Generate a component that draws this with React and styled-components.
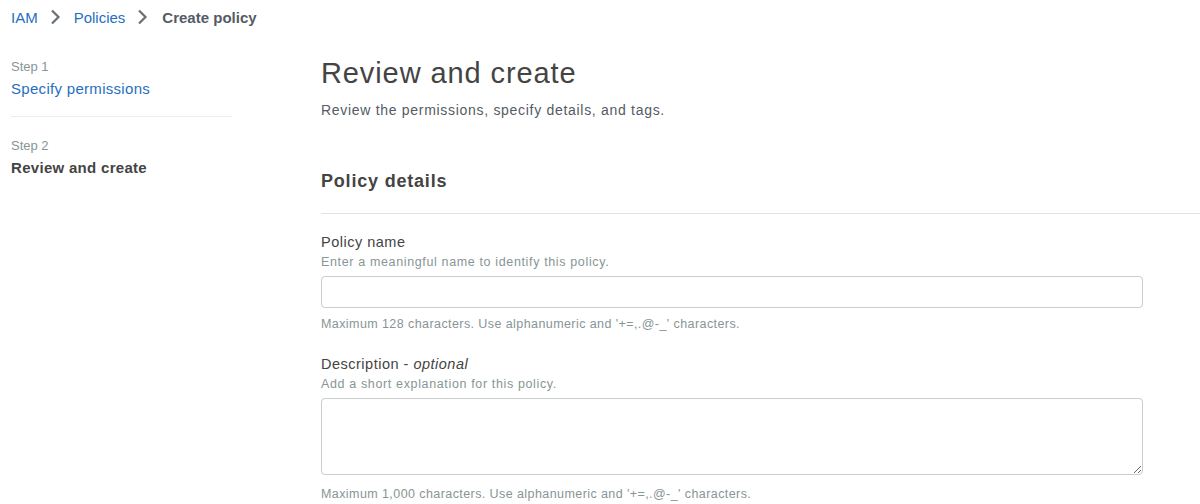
import React from "react";
import styled, { createGlobalStyle } from "styled-components";

const GlobalStyle = createGlobalStyle`
  body {
    margin: 0;
    background: #ffffff;
    font-family: "Liberation Sans", Arial, sans-serif;
    color: #444444;
  }
`;

const Page = styled.div`
  width: 1200px;
  height: 504px;
  overflow: hidden;
`;

const Breadcrumbs = styled.nav`
  height: 34px;
  display: flex;
  align-items: center;
  padding-left: 11px;
  font-size: 15px;
`;

const Crumb = styled.a`
  color: ${(p) => (p.$current ? "#545b64" : "#1f6fbf")};
  font-weight: ${(p) => (p.$current ? 700 : 400)};
  text-decoration: none;
`;

const Chevron = styled.svg`
  width: 12px;
  height: 16px;
  margin: 0 ${(p) => p.$gap || 12}px 0 11px;
`;

const Body = styled.div`
  display: flex;
  align-items: flex-start;
`;

const SideNav = styled.ol`
  list-style: none;
  margin: 0 0 0 11px;
  padding: 24px 0 0;
  width: 221px;
  flex-shrink: 0;
`;

const Step = styled.li`
  padding: ${(p) => (p.$first ? "0 0 16px" : "20px 0 0")};
  border-bottom: ${(p) => (p.$first ? "1px solid #eaeded" : "none")};
`;

const StepNumber = styled.div`
  font-size: 13px;
  line-height: 18px;
  color: #879596;
`;

const StepTitle = styled.div`
  margin-top: 2px;
  font-size: 15px;
  line-height: 22px;
  letter-spacing: 0.3px;
  color: ${(p) => (p.$active ? "#444444" : "#1f6fbf")};
  font-weight: ${(p) => (p.$active ? 700 : 400)};
`;

const Main = styled.main`
  flex: 1;
  margin-left: 89px;
  padding-top: 21px;
`;

const Title = styled.h1`
  margin: 0;
  font-size: 29px;
  line-height: 36px;
  font-weight: 400;
  letter-spacing: 0.9px;
  color: #444444;
`;

const Subtitle = styled.p`
  margin: 9px 0 0;
  font-size: 14px;
  line-height: 20px;
  color: #545b64;
  letter-spacing: 0.7px;
`;

const SectionHeader = styled.h2`
  margin: 49px 0 0;
  padding-bottom: 20px;
  border-bottom: 1px solid #e1e4e4;
  font-size: 18px;
  line-height: 24px;
  font-weight: 700;
  letter-spacing: 0.8px;
  color: #444444;
`;

const Form = styled.div`
  padding: 18px 57px 0 0;
`;

const Field = styled.div`
  margin-top: ${(p) => p.$top || 0}px;
  display: flex;
  flex-direction: column;
`;

const Label = styled.label`
  font-size: 14.5px;
  line-height: 20px;
  color: #444444;
  letter-spacing: 0.5px;

  em {
    font-style: italic;
  }
`;

const Hint = styled.span`
  margin-top: 2px;
  font-size: 12.5px;
  line-height: 16px;
  color: #879596;
  letter-spacing: 0.64px;
`;

const Constraint = styled.span`
  margin-top: ${(p) => p.$top || 8}px;
  font-size: 12.5px;
  line-height: 16px;
  color: #879596;
  letter-spacing: 0.42px;
`;

const TextInput = styled.input`
  margin-top: 6px;
  box-sizing: border-box;
  width: 100%;
  height: 32px;
  border: 1px solid #c9cdcd;
  border-radius: 4px;
  padding: 4px 10px;
  font: inherit;
  font-size: 14px;
  outline: none;
`;

const TextArea = styled.textarea`
  margin-top: 6px;
  display: block;
  box-sizing: border-box;
  width: 100%;
  height: 77px;
  border: 1px solid #c9cdcd;
  border-radius: 4px;
  padding: 4px 10px;
  font: inherit;
  font-size: 14px;
  outline: none;
  resize: vertical;
`;

const ChevronIcon = ({ gap }) => (
  <Chevron viewBox="0 0 12 16" $gap={gap}>
    <path d="M3 1.5l6.5 6.5-6.5 6.5" fill="none" stroke="#687078" strokeWidth="2.2" />
  </Chevron>
);

export default function App() {
  return (
    <Page>
      <GlobalStyle />
      <Breadcrumbs>
        <Crumb href="#">IAM</Crumb>
        <ChevronIcon gap={13} />
        <Crumb href="#">Policies</Crumb>
        <ChevronIcon gap={14} />
        <Crumb $current>Create policy</Crumb>
      </Breadcrumbs>
      <Body>
        <SideNav>
          <Step $first>
            <StepNumber>Step 1</StepNumber>
            <StepTitle>Specify permissions</StepTitle>
          </Step>
          <Step>
            <StepNumber>Step 2</StepNumber>
            <StepTitle $active>Review and create</StepTitle>
          </Step>
        </SideNav>
        <Main>
          <Title>Review and create</Title>
          <Subtitle>Review the permissions, specify details, and tags.</Subtitle>
          <SectionHeader>Policy details</SectionHeader>
          <Form>
            <Field>
              <Label>Policy name</Label>
              <Hint>Enter a meaningful name to identify this policy.</Hint>
              <TextInput type="text" />
              <Constraint>
                Maximum 128 characters. Use alphanumeric and '+=,.@-_' characters.
              </Constraint>
            </Field>
            <Field $top={22}>
              <Label>
                Description - <em>optional</em>
              </Label>
              <Hint>Add a short explanation for this policy.</Hint>
              <TextArea />
              <Constraint $top={11}>
                Maximum 1,000 characters. Use alphanumeric and '+=,.@-_' characters.
              </Constraint>
            </Field>
          </Form>
        </Main>
      </Body>
    </Page>
  );
}
